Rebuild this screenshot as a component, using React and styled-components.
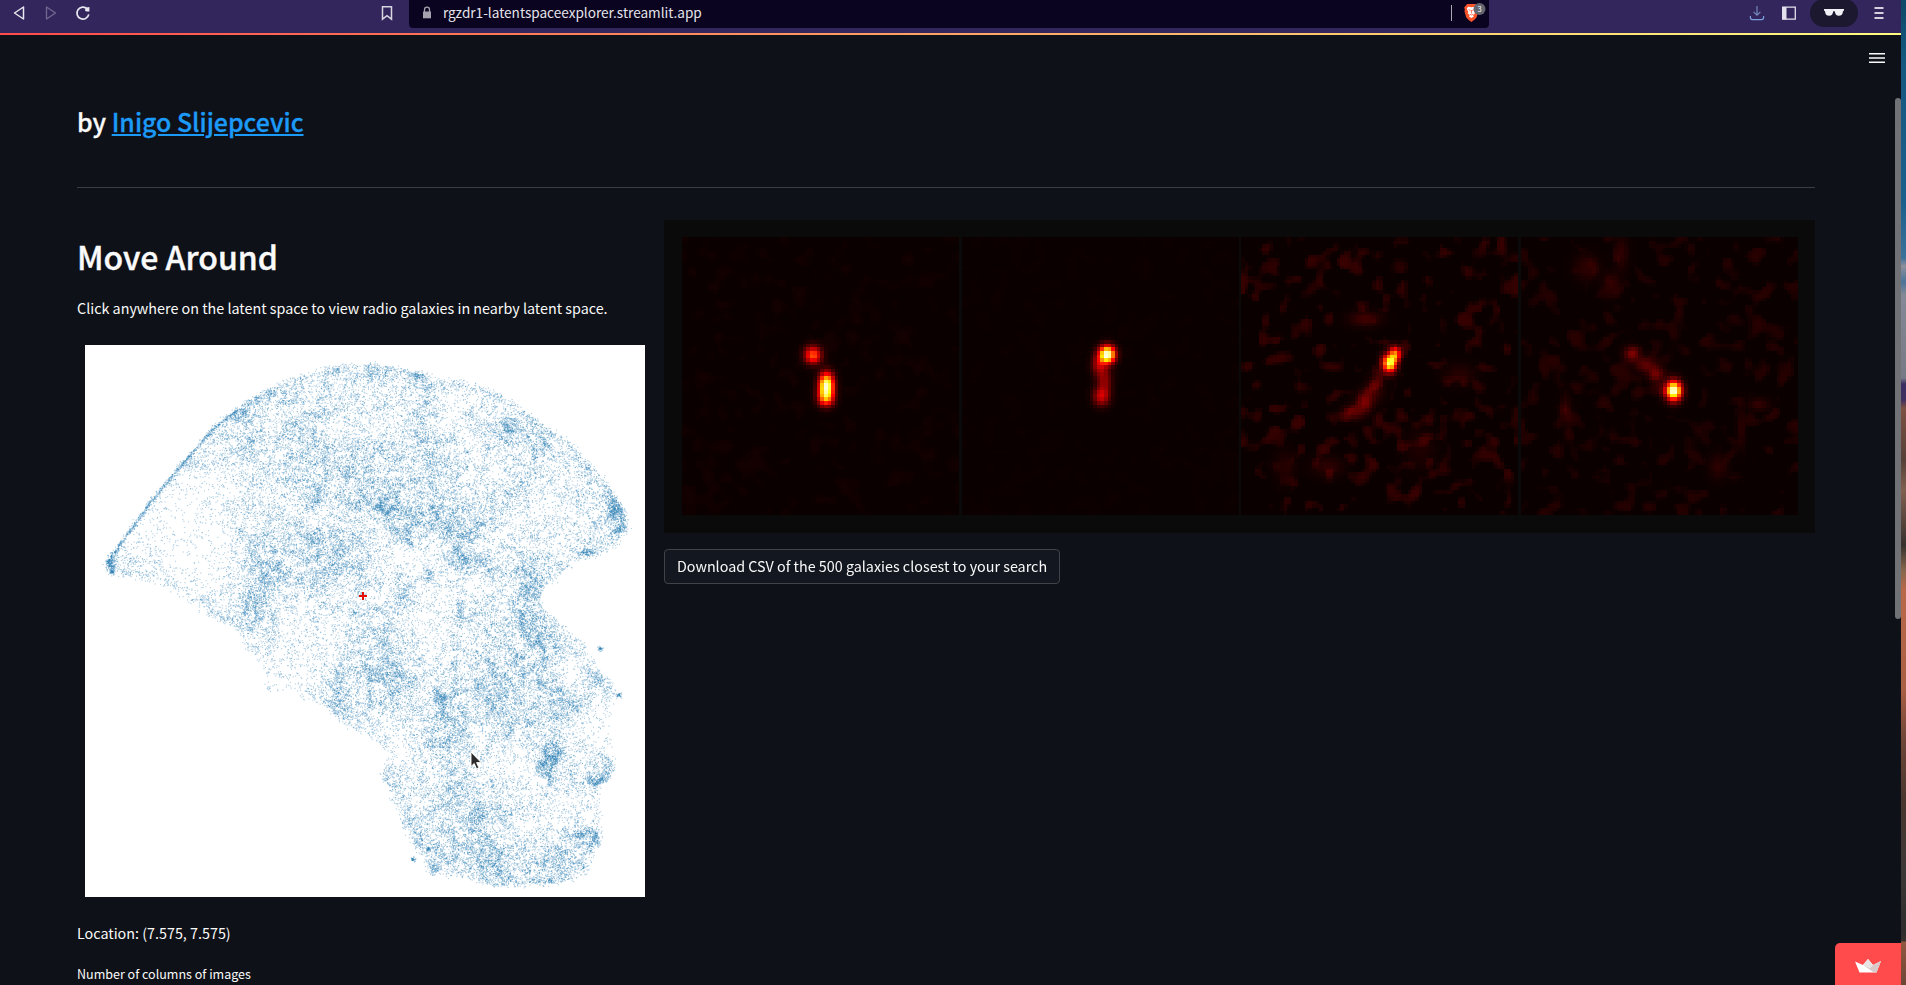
import React, { useLayoutEffect, useRef } from "react";
import styled, { createGlobalStyle } from "styled-components";

const GlobalStyle = createGlobalStyle`
  * { box-sizing: border-box; }
  html, body { margin: 0; padding: 0; height: 100%; overflow: hidden; background: #0e1117; }
  body { font-family: "Noto Sans CJK SC", "Noto Sans", sans-serif; color: #fafafa; }
`;

/* ---------- random fields ---------- */

function createRandom(seed) {
  let s = seed >>> 0;
  return () => {
    s = (s + 0x6d2b79f5) >>> 0;
    let t = s;
    t = Math.imul(t ^ (t >>> 15), t | 1);
    t ^= t + Math.imul(t ^ (t >>> 7), t | 61);
    return ((t ^ (t >>> 14)) >>> 0) / 4294967296;
  };
}

function gaussian(random) {
  return Math.sqrt(-2 * Math.log(random() + 1e-9)) * Math.cos(2 * Math.PI * random());
}

function createNoise(seed, cell) {
  const random = createRandom(seed);
  const n = 256;
  const grid = Array.from({ length: n * n }, random);
  const at = (i, j) => grid[(j & 255) * n + (i & 255)];
  const ease = (t) => t * t * (3 - 2 * t);
  return (x, y) => {
    const u = x / cell;
    const v = y / cell;
    const i = Math.floor(u);
    const j = Math.floor(v);
    const a = ease(u - i);
    const b = ease(v - j);
    return (
      (at(i, j) * (1 - a) + at(i + 1, j) * a) * (1 - b) +
      (at(i, j + 1) * (1 - a) + at(i + 1, j + 1) * a) * b
    );
  };
}

/* ---------- latent space scatter ---------- */

const OUTLINE = [
  [95, 630], [120, 595], [210, 465], [300, 355], [380, 262], [450, 208], [520, 165], [600, 130],
  [690, 103], [800, 92], [870, 103], [935, 118], [975, 140], [1030, 137], [1120, 165], [1190, 210],
  [1260, 262], [1330, 310], [1390, 380], [1440, 440], [1470, 490], [1475, 540], [1440, 580],
  [1395, 605], [1340, 618], [1290, 660], [1250, 705], [1245, 745], [1290, 785], [1350, 830],
  [1390, 890], [1430, 955], [1465, 987], [1440, 1000], [1435, 1100], [1445, 1195], [1395, 1240],
  [1412, 1300], [1410, 1360], [1385, 1440], [1365, 1470], [1290, 1492], [1200, 1503], [1130, 1500],
  [1050, 1478], [960, 1468], [930, 1410], [890, 1355], [865, 1290], [828, 1195], [850, 1150],
  [815, 1105], [740, 1065], [680, 1020], [600, 988], [525, 970], [510, 900], [465, 850], [440, 800],
  [370, 770], [300, 720], [250, 690], [180, 670], [110, 658],
];

/* x, y, radius x, radius y, weight */
const CLUSTERS = [
  [500, 640, 45, 70, 0.6], [800, 465, 50, 18, 1.1], [840, 485, 20, 16, 1.1], [780, 380, 110, 50, 0.5],
  [900, 490, 60, 34, 0.6], [970, 515, 55, 28, 0.9], [1045, 555, 28, 32, 1.3], [1052, 622, 26, 16, 2],
  [1150, 645, 60, 24, 0.8], [1215, 710, 28, 60, 0.9], [680, 590, 110, 50, 0.5], [580, 690, 70, 35, 0.4],
  [485, 740, 22, 40, 0.5], [655, 460, 22, 18, 1], [820, 940, 60, 45, 0.9], [870, 850, 35, 60, 0.4],
  [760, 770, 60, 20, 0.4], [710, 990, 14, 40, 0.5], [985, 1000, 15, 24, 1.4], [1025, 1075, 26, 30, 1.4],
  [1020, 920, 9, 80, 0.8], [1035, 770, 13, 24, 1.6], [1200, 920, 90, 80, 0.5], [1120, 960, 50, 30, 0.5],
  [1180, 1050, 100, 60, 0.35], [1340, 1010, 30, 25, 0.6], [1274, 1168, 12, 28, 5], [1250, 1185, 12, 12, 2],
  [1295, 1145, 12, 14, 2.4], [1408, 1222, 24, 8, 5], [1420, 1185, 22, 30, 0.9], [1360, 1366, 30, 20, 1.4],
  [1398, 1375, 11, 20, 2.4], [1010, 1380, 90, 60, 0.65], [1110, 1305, 28, 16, 1.6], [1130, 1440, 50, 40, 0.9],
  [1290, 1440, 40, 30, 1], [1240, 1490, 40, 10, 1.4], [1020, 1230, 35, 60, 0.6], [970, 1170, 60, 50, 0.3],
  [1452, 485, 18, 16, 3], [1462, 538, 13, 16, 4], [1172, 262, 14, 14, 2], [1245, 310, 22, 20, 1.2],
  [940, 290, 50, 14, 1], [940, 200, 20, 34, 0.6], [620, 245, 40, 35, 0.5], [705, 108, 16, 7, 2.4],
  [928, 120, 14, 6, 3], [815, 110, 20, 16, 1], [520, 180, 40, 14, 1], [455, 228, 30, 13, 1.1],
  [870, 535, 30, 8, 1.4], [893, 570, 9, 9, 5], [904, 582, 7, 6, 4], [955, 662, 9, 13, 3],
  [890, 700, 18, 18, 0.9], [1420, 958, 22, 18, 1.2], [1380, 602, 26, 7, 2], [315, 350, 30, 16, 0.9],
  [470, 312, 16, 14, 1], [1410, 430, 40, 60, 0.35], [960, 1462, 12, 10, 2], [1240, 820, 40, 30, 0.6],
  [838, 1210, 11, 16, 1.6], [480, 805, 30, 9, 1], [535, 815, 9, 40, 0.6], [455, 490, 30, 20, 0.6],
  [104, 625, 8, 26, 6], [525, 965, 10, 8, 2], [200, 640, 60, 22, 0.2], [325, 572, 30, 9, 0.6],
  [750, 640, 30, 8, 0.9],
];

const VOIDS = [
  [300, 500, 110, 90, 0.9], [350, 640, 80, 60, 0.8], [250, 590, 80, 50, 0.5], [390, 420, 60, 45, 0.5],
  [880, 622, 55, 32, 0.75], [960, 750, 50, 80, 0.6], [960, 860, 40, 70, 0.4], [600, 800, 50, 50, 0.75],
  [600, 920, 60, 50, 0.8], [700, 790, 40, 40, 0.5], [1300, 460, 60, 60, 0.5], [1240, 560, 60, 50, 0.35],
  [1400, 1060, 50, 80, 0.8], [1160, 1180, 80, 60, 0.6], [1332, 915, 22, 40, 0.8], [870, 1130, 40, 60, 0.6],
  [1085, 690, 45, 28, 0.7], [1080, 1070, 28, 20, 0.75], [1330, 1290, 60, 28, 0.5], [1030, 190, 40, 25, 0.65],
  [820, 270, 90, 26, 0.5], [1115, 385, 30, 26, 0.5], [1220, 1370, 60, 40, 0.4], [800, 524, 60, 18, 0.5],
  [560, 450, 60, 40, 0.3], [500, 870, 30, 40, 0.5], [1060, 860, 60, 40, 0.2], [920, 1220, 40, 50, 0.3],
];

function isInside(x, y) {
  let inside = false;
  for (let i = 0, j = OUTLINE.length - 1; i < OUTLINE.length; j = i++) {
    const [xi, yi] = OUTLINE[i];
    const [xj, yj] = OUTLINE[j];
    if (yi > y !== yj > y && x < ((xj - xi) * (y - yi)) / (yj - yi) + xi) inside = !inside;
  }
  return inside;
}

const bump = (x, y, [cx, cy, rx, ry, w]) =>
  w * Math.exp(-0.5 * (((x - cx) / rx) ** 2 + ((y - cy) / ry) ** 2));

function drawScatter(canvas) {
  const { width, height } = canvas;
  const random = createRandom(11);
  const coarse = createNoise(5, 46);
  const fine = createNoise(8, 15);
  const ink = new Float32Array(width * height);

  const splat = (x, y, amount) => {
    const px = (x - 40) / 2.658;
    const py = (y - 41) / 2.703;
    const i = Math.floor(px);
    const j = Math.floor(py);
    if (i < 0 || j < 0 || i >= width - 1 || j >= height - 1) return;
    const a = px - i;
    const b = py - j;
    ink[j * width + i] += amount * (1 - a) * (1 - b);
    ink[j * width + i + 1] += amount * a * (1 - b);
    ink[(j + 1) * width + i] += amount * (1 - a) * b;
    ink[(j + 1) * width + i + 1] += amount * a * b;
  };

  for (let n = 0; n < 700000; n++) {
    const x = 80 + random() * 1410;
    const y = 85 + random() * 1425;
    const jx = x + gaussian(random) * 5;
    const jy = y + gaussian(random) * 5;
    if (!isInside(jx, jy)) continue;
    let density = 0.44;
    for (const c of CLUSTERS) density += bump(x, y, c) * 0.85;
    let keep = 1;
    for (const v of VOIDS) keep *= 1 - bump(x, y, v);
    density *= keep;
    const texture = 0.14 + coarse(x, y) * 0.3 + fine(x, y) * 0.75;
    density *= 0.1 + 1.3 * texture * texture;
    if (random() < density * 0.35) splat(x, y, 0.4);
  }

  /* The rim of the embedding is denser than its interior. */
  for (let k = 0; k < 28; k++) {
    const [x0, y0] = OUTLINE[k];
    const [x1, y1] = OUTLINE[k + 1];
    const count = Math.hypot(x1 - x0, y1 - y0) * (k < 5 ? 1.5 : k < 21 ? 0.5 : 0.25);
    for (let n = 0; n < count; n++) {
      const t = random();
      const spread = k < 5 ? 2.8 : 5.5;
      splat(
        x0 + (x1 - x0) * t + gaussian(random) * spread,
        y0 + (y1 - y0) * t + 4 + gaussian(random) * spread,
        0.4
      );
    }
  }

  [[1408, 861, 3.5], [911, 1430, 3], [110, 653, 4], [952, 1403, 3], [1458, 987, 4]].forEach(([x, y, r]) => {
    for (let n = 0; n < 40; n++) splat(x + gaussian(random) * r, y + gaussian(random) * r, 0.4);
  });

  const context = canvas.getContext("2d");
  const image = context.createImageData(width, height);
  ink.forEach((value, i) => {
    const alpha = 1 - Math.exp(-value * 1.2);
    image.data[i * 4] = 255 - 224 * alpha;
    image.data[i * 4 + 1] = 255 - 136 * alpha;
    image.data[i * 4 + 2] = 255 - 80 * alpha;
    image.data[i * 4 + 3] = 255;
  });
  context.putImageData(image, 0, 0);
}

/* ---------- radio galaxy cut-outs ---------- */

const SIZE = 78;

/* sources: x, y, radius x, radius y, intensity */
const GALAXIES = [
  {
    seed: 3, noise: 0.014, floor: 0,
    sources: [[36.4, 32.7, 1.6, 1.6, 0.5], [40.2, 41, 1.4, 2.2, 0.92], [40, 44.6, 1.5, 1.6, 0.5]],
  },
  {
    seed: 14, noise: 0.005, floor: 0,
    sources: [[40.4, 32.5, 1.5, 1.6, 1], [38.7, 44.3, 1.5, 1.7, 0.26], [39.6, 39.7, 1.4, 3, 0.19], [38, 35.3, 1.3, 2, 0.22]],
  },
  {
    seed: 27, noise: 0.07, floor: 0,
    sources: [
      [41.3, 34.9, 1.3, 1.7, 0.85], [42.9, 32.3, 1, 1.4, 0.5], [34.3, 45.6, 1.5, 1.9, 0.17],
      [31.2, 48.6, 2, 1.4, 0.12], [37.3, 42, 1.6, 2.5, 0.08], [34.5, 22.5, 3, 1.4, 0.08],
      [24, 64, 3, 2, 0.05], [12, 64, 2, 3, 0.04], [50, 59, 3, 4, 0.03], [61, 38, 3, 2, 0.04],
    ],
  },
  {
    seed: 41, noise: 0.044, floor: 0,
    sources: [
      [42.5, 42.6, 1.5, 1.8, 1.02], [30.7, 32.3, 1.5, 1.4, 0.16], [34.5, 35.3, 2, 1.5, 0.12],
      [37.6, 38, 1.5, 1.5, 0.15], [18, 8, 2.4, 2.6, 0.05], [25, 12.8, 1.6, 2.2, 0.06], [27.8, 4, 1.3, 3.4, 0.05],
      [55, 64, 1.8, 2.4, 0.05], [66.5, 46.5, 2, 1.2, 0.06], [61.5, 53, 0.8, 4, 0.05], [12, 48, 1, 3, 0.06],
    ],
  },
];

function drawGalaxy(canvas, { seed, noise, floor, sources }) {
  const random = createRandom(seed);
  const white = Array.from({ length: SIZE * SIZE }, () => gaussian(random));
  const kernel = [0.18, 0.68, 1, 0.68, 0.18];
  const blur = (source, dx, dy) =>
    source.map((_, i) => {
      const x = i % SIZE;
      const y = (i / SIZE) | 0;
      return kernel.reduce((sum, weight, k) => {
        const u = (x + (k - 2) * dx + SIZE) % SIZE;
        const v = (y + (k - 2) * dy + SIZE) % SIZE;
        return sum + weight * source[v * SIZE + u];
      }, 0);
    });
  const field = blur(blur(white, 1, 0), 0, 1);

  const context = canvas.getContext("2d");
  const image = context.createImageData(SIZE, SIZE);
  const channel = (v) => Math.round(255 * Math.min(1, Math.max(0, v)));
  field.forEach((value, i) => {
    const x = i % SIZE;
    const y = (i / SIZE) | 0;
    let v = floor + Math.tanh(Math.max(0, value / 2 - 0.4) * 0.7) * noise;
    sources.forEach((s) => { v += bump(x, y, s); });
    image.data[i * 4] = channel(0.0416 + v / 0.381);
    image.data[i * 4 + 1] = channel((v - 0.365) / 0.381);
    image.data[i * 4 + 2] = channel((v - 0.746) / 0.254);
    image.data[i * 4 + 3] = 255;
  });
  context.putImageData(image, 0, 0);
}

/* ---------- browser chrome ---------- */

const Desktop = styled.div`
  display: grid;
  grid-template-columns: 1901px 5px;
  width: 1906px;
  height: 985px;
  overflow: hidden;
`;

const Wallpaper = styled.div`
  background: linear-gradient(
    to bottom,
    #0e4a68 0, #14587f 60px, #1b5f8c 200px, #3c7199 258px, #8d8f9b 266px, #4b7498 282px, #858896 295px,
    #777986 378px, #3a2c62 384px, #40305f 400px, #7d5143 408px, #554037 460px, #806050 490px, #37302d 545px,
    #85664c 570px, #b9694a 590px, #a85f43 690px, #6e4637 740px, #49362f 800px, #3c3836 870px, #2e2c2c 930px,
    #37302d 941px, #93563e 942px, #6d4637 985px
  );
`;

const Window = styled.div`
  display: flex;
  flex-direction: column;
  min-width: 0;
  height: 985px;
  background: #0e1117;
`;

const Toolbar = styled.header`
  display: flex;
  flex: none;
  height: 33px;
  background: #32265c;
`;

const ToolIcon = styled.svg`
  display: block;
  flex: none;
  width: ${(p) => p.$width || 18}px;
  height: ${(p) => p.$height || 26}px;
  margin-left: ${(p) => p.$gap || 0}px;
`;

const AddressBar = styled.div`
  display: flex;
  align-items: center;
  width: 1080px;
  height: 28px;
  margin-left: 13px;
  padding-bottom: 2px;
  border-radius: 0 0 4px 4px;
  background: #0a0420;
`;

const Url = styled.span`
  flex: 1;
  margin-left: 7px;
  padding-bottom: 2px;
  font-size: 13.6px;
  line-height: 24px;
  color: #e4e3e8;
`;

const BarDivider = styled.span`
  width: 1px;
  height: 16px;
  background: #aaa8b2;
`;

const PrivatePill = styled.div`
  display: flex;
  justify-content: center;
  width: 48px;
  height: 28px;
  margin: -1px 0 0 12px;
  border-radius: 14px;
  background: #1c1830;
`;

const GradientLine = styled.div`
  flex: none;
  height: 2px;
  background: linear-gradient(90deg, #ff4b4b, #fffd80);
`;

/* ---------- page ---------- */

const Page = styled.main`
  display: flex;
  flex: 1;
  min-height: 0;
`;

const Content = styled.div`
  width: 1815px;
  padding-left: 77px;
`;

const Byline = styled.h3`
  margin: 64px 0 0;
  height: 46px;
  font-size: 24.9px;
  font-weight: 500;
  line-height: 44px;
  -webkit-text-stroke: 0.3px;
`;

const AuthorLink = styled.a`
  color: #1c9af8;
  text-decoration: underline;
  text-decoration-thickness: 2px;
  text-underline-offset: 2px;
`;

const Divider = styled.hr`
  height: 1px;
  margin: 42px 0 32px;
  border: 0;
  background: #3b3d43;
`;

const Columns = styled.div`
  display: grid;
  grid-template-columns: 568px 1151px;
  column-gap: 19px;
`;

const Title = styled.h2`
  height: 49px;
  margin: 12px 0 0;
  font-size: 32px;
  font-weight: 500;
  line-height: 48px;
  -webkit-text-stroke: 0.4px;
`;

const Text = styled.p`
  height: 24px;
  margin: ${(p) => p.$top}px 0 0;
  font-size: ${(p) => p.$size || 14.33}px;
  line-height: 24px;
  white-space: nowrap;
`;

const Plot = styled.div`
  position: relative;
  width: 560px;
  height: 552px;
  margin: 25px 0 0 8px;
  background: #fff;
`;

const PlotCanvas = styled.canvas`
  display: block;
`;

const Marker = styled.svg`
  position: absolute;
  left: 273px;
  top: 246px;
`;

const Pointer = styled.svg`
  position: absolute;
  left: 385px;
  top: 406px;
`;

const Gallery = styled.div`
  display: flex;
  justify-content: space-between;
  height: 313px;
  padding: 17px 17px 18px 18px;
  background: #0a0a0a;
`;

const GalaxyCanvas = styled.canvas`
  display: block;
  width: 277px;
  height: 278px;
  image-rendering: pixelated;
`;

const DownloadButton = styled.button`
  display: block;
  width: 396px;
  height: 35px;
  margin-top: 16px;
  padding: 0 0 2px;
  border: 1px solid #414349;
  border-radius: 4px;
  background: #13171f;
  color: #fafafa;
  font-family: inherit;
  font-size: 14.33px;
  line-height: 22px;
  white-space: nowrap;
`;

const Rail = styled.aside`
  display: flex;
  flex-direction: column;
  align-items: flex-end;
  justify-content: space-between;
  width: 86px;
`;

const MenuIcon = styled.svg`
  display: block;
  margin: 17px 16px 0 0;
`;

const ScrollThumb = styled.div`
  width: 6px;
  height: 521px;
  margin: 35px 0 auto;
  border-radius: 3px;
  background: #707276;
`;

const HostBadge = styled.div`
  display: flex;
  justify-content: center;
  width: 66px;
  height: 42px;
  padding-top: 15px;
  border-radius: 5px 0 0 0;
  background: #ff4b4b;
`;

function LatentSpace() {
  const ref = useRef(null);
  useLayoutEffect(() => drawScatter(ref.current), []);
  return (
    <Plot>
      <PlotCanvas ref={ref} width={560} height={552} />
      <Marker width="9" height="9" viewBox="0 0 9 9" shapeRendering="crispEdges">
        <path d="M3.5 0.5h2v3h3v2h-3v3h-2v-3h-3v-2h3z" fill="#e3120b" />
      </Marker>
      <Pointer width="13" height="20" viewBox="0 0 13 20">
        <path d="M1 1v14.5l3.2-3 2.3 5.3 2.4-1-2.3-5.2h4.6z" fill="#2b2b2b" stroke="#fff" strokeWidth="0.9" />
      </Pointer>
    </Plot>
  );
}

function Galaxy({ data }) {
  const ref = useRef(null);
  useLayoutEffect(() => drawGalaxy(ref.current, data), [data]);
  return <GalaxyCanvas ref={ref} width={SIZE} height={SIZE} />;
}

function BrowserToolbar() {
  return (
    <Toolbar>
      <ToolIcon $gap={11} viewBox="0 0 18 26">
        <path d="M12.5 7v12L3.5 13z" fill="none" stroke="#e8e6ee" strokeWidth="1.5" strokeLinejoin="round" />
      </ToolIcon>
      <ToolIcon $gap={14} viewBox="0 0 18 26">
        <path d="M3.5 7v12l9-6z" fill="none" stroke="#73698f" strokeWidth="1.3" strokeLinejoin="round" />
      </ToolIcon>
      <ToolIcon $gap={13} viewBox="0 0 18 26">
        <path d="M13.2 8.8A6 6 0 1 0 14.8 14.4" fill="none" stroke="#e8e6ee" strokeWidth="1.7" />
        <path d="M15.4 7v4.6h-2.8a1.6 1.6 0 0 1-1.6-1.8L12.4 7.6z" fill="#e8e6ee" />
      </ToolIcon>
      <ToolIcon $gap={286} viewBox="0 0 18 26">
        <path d="M4.5 6.8h9v12.4L9 15.6l-4.5 3.6z" fill="none" stroke="#d9d6e2" strokeWidth="1.5" />
      </ToolIcon>
      <AddressBar>
        <ToolIcon $gap={9} viewBox="0 0 18 26">
          <path d="M5 11.5h8v6.8H5z" fill="#a5a3ad" />
          <path d="M6.5 12V9.7a2.5 2.5 0 0 1 5 0V12" fill="none" stroke="#a5a3ad" strokeWidth="1.3" />
        </ToolIcon>
        <Url>rgzdr1-latentspaceexplorer.streamlit.app</Url>
        <BarDivider />
        <ToolIcon $gap={11} $width={26} viewBox="0 0 26 26">
          <path d="M4.2 4h8.4l1.8 2 1.2 1.6-.6 2 .3 2-1.8 6-2.4 2.4L8.4 22l-2.7-2-2.4-2.4-1.8-6 .3-2-.6-2L2.4 6z" fill="#fb542b" />
          <path d="M8.4 7.2l3.4-.4 1.2 2-1.6 3.2.6 1.6-2 1.4.8 1.4L8.4 18l-2.4-1.6.8-1.4-2-1.4.6-1.6-1.6-3.2 1.2-2z" fill="#fff" />
          <path d="M5.6 9.6l2 .8M11.2 9.6l-2 .8M8.4 10v3.4M6.8 14.2l1.6.8 1.6-.8" fill="none" stroke="#fb542b" strokeWidth="0.8" />
          <circle cx="16.5" cy="9" r="6" fill="#63656f" />
          <text x="16.5" y="11.7" textAnchor="middle" fontSize="7.5" fill="#fff">3</text>
        </ToolIcon>
      </AddressBar>
      <ToolIcon $gap={259} viewBox="0 0 18 26">
        <path d="M9 6v9.2M5.6 11.8L9 15.2l3.4-3.4" fill="none" stroke="#7488bd" strokeWidth="1.2" />
        <path d="M2.4 16v1.6a2 2 0 0 0 2 2h9.2a2 2 0 0 0 2-2V16" fill="none" stroke="#7ba0dd" strokeWidth="1.2" />
      </ToolIcon>
      <ToolIcon $gap={14} viewBox="0 0 18 26">
        <path d="M2.7 7.2h12.6v12H2.7z" fill="none" stroke="#e4e1ec" strokeWidth="1.3" />
        <path d="M2.5 7h4v12.4h-4z" fill="#e4e1ec" />
      </ToolIcon>
      <PrivatePill>
        <ToolIcon $width={22} viewBox="0 0 22 26">
          <path d="M1 10h20v1.6l-1 .6c-.2 3-1.6 4.6-4.2 4.6-2.4 0-3.6-1.4-4-4.2l-.8-.6-.8.6c-.4 2.8-1.6 4.2-4 4.2-2.6 0-4-1.6-4.2-4.6l-1-.6z" fill="#f1f0f4" />
        </ToolIcon>
      </PrivatePill>
      <ToolIcon $gap={12} viewBox="0 0 18 26">
        <path d="M4.5 8h9M4.5 13h9M4.5 18h9" stroke="#d5d2de" strokeWidth="1.8" />
      </ToolIcon>
    </Toolbar>
  );
}

export default function App() {
  return (
    <>
      <GlobalStyle />
      <Desktop>
        <Window>
          <BrowserToolbar />
          <GradientLine />
          <Page>
            <Content>
              <Byline>
                by <AuthorLink>Inigo Slijepcevic</AuthorLink>
              </Byline>
              <Divider />
              <Columns>
                <div>
                  <Title>Move Around</Title>
                  <Text $top={15}>Click anywhere on the latent space to view radio galaxies in nearby latent space.</Text>
                  <LatentSpace />
                  <Text $top={24}>Location: (7.575, 7.575)</Text>
                  <Text $top={17} $size={12.53}>Number of columns of images</Text>
                </div>
                <div>
                  <Gallery>
                    {GALAXIES.map((galaxy) => (
                      <Galaxy key={galaxy.seed} data={galaxy} />
                    ))}
                  </Gallery>
                  <DownloadButton>Download CSV of the 500 galaxies closest to your search</DownloadButton>
                </div>
              </Columns>
            </Content>
            <Rail>
              <MenuIcon width="16" height="11" viewBox="0 0 16 11">
                <path d="M0 1h16v1.5H0zM0 5.25h16v1.5H0zM0 9.5h16V11H0z" fill="#fafafa" />
              </MenuIcon>
              <ScrollThumb />
              <HostBadge>
                <svg width="28" height="16" viewBox="0 0 28 16">
                  <path d="M1 3.5l8 3.5 5-6 5 6 8-4-4.500 11.500h-17z" fill="#fff" />
                  <path d="M9 7l5-6 5 6-3 3z" fill="#e9e4e4" />
                  <path d="M9 7l11 7.500h2.500L27 3l-8 4-3 3z" fill="#d9c9ca" />
                </svg>
              </HostBadge>
            </Rail>
          </Page>
        </Window>
        <Wallpaper />
      </Desktop>
    </>
  );
}
